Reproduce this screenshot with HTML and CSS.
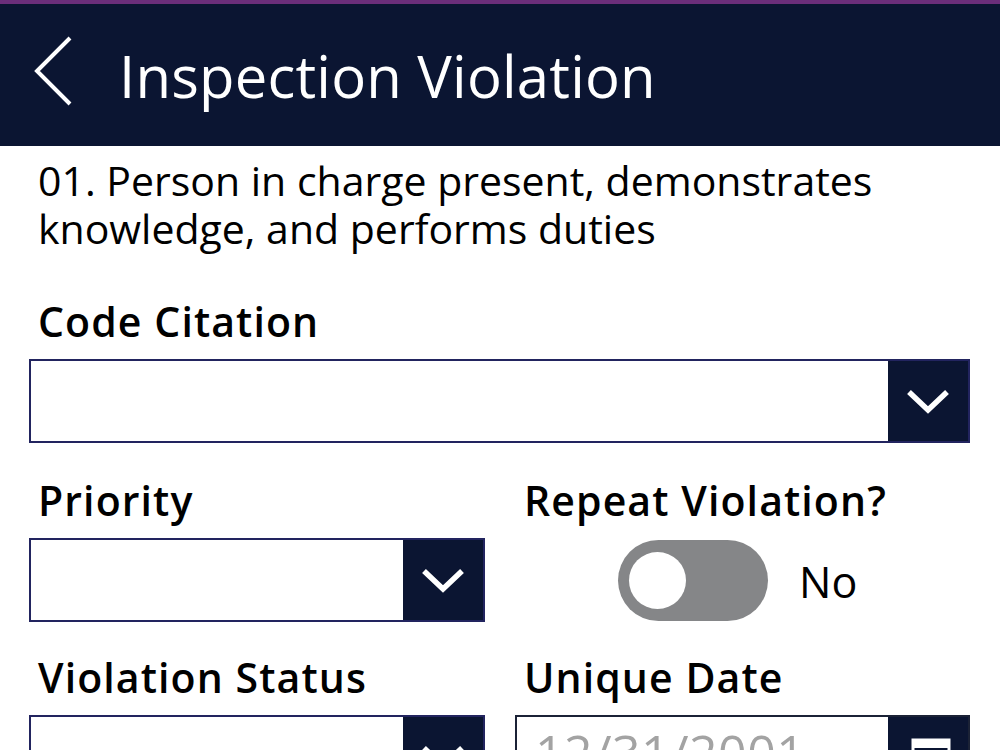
FILE: index.html
```html
<!DOCTYPE html>
<html>
<head>
<meta charset="utf-8">
<link rel="stylesheet" href="styles.css">
</head>
<body>
<div class="topstrip"></div>
<header class="header">
  <svg class="back" width="50" height="80" viewBox="0 0 50 80"><polyline points="36,2 3,35 36,68" fill="none" stroke="#fff" stroke-width="4"/></svg>
  <h1 class="title">Inspection Violation</h1>
</header>
<main class="form">
  <p class="desc">01. Person in charge present, demonstrates knowledge, and performs duties</p>
  <div class="field">
    <label class="label">Code Citation</label>
    <div class="select">
      <div class="select-value"></div>
      <div class="select-btn"><svg width="44" height="26" viewBox="0 0 44 26"><polyline points="3,3 22,21 41,3" fill="none" stroke="#fff" stroke-width="5.5"/></svg></div>
    </div>
  </div>
  <div class="row">
    <div class="field">
      <label class="label">Priority</label>
      <div class="select">
        <div class="select-value"></div>
        <div class="select-btn"><svg width="44" height="26" viewBox="0 0 44 26"><polyline points="3,3 22,21 41,3" fill="none" stroke="#fff" stroke-width="5.5"/></svg></div>
      </div>
    </div>
    <div class="field">
      <label class="label">Repeat Violation?</label>
      <div class="toggle-row">
        <div class="toggle"><div class="knob"></div></div>
        <span class="toggle-text">No</span>
      </div>
    </div>
  </div>
  <div class="row row-last">
    <div class="field">
      <label class="label">Violation Status</label>
      <div class="select">
        <div class="select-value"></div>
        <div class="select-btn"><svg width="44" height="26" viewBox="0 0 44 26"><polyline points="3,3 22,21 41,3" fill="none" stroke="#fff" stroke-width="5.5"/></svg></div>
      </div>
    </div>
    <div class="field">
      <label class="label">Unique Date</label>
      <div class="select date">
        <div class="select-value date-text">12/31/2001</div>
        <div class="select-btn cal-btn"><svg width="40" height="40" viewBox="0 0 40 40"><rect x="2" y="2" width="36" height="34" fill="none" stroke="#fff" stroke-width="3"/><rect x="2" y="2" width="36" height="8" fill="#fff"/></svg></div>
      </div>
    </div>
  </div>
</main>
</body>
</html>
```

FILE: styles.css
```css
html, body {
  margin: 0;
  padding: 0;
  background: #fff;
}
body {
  font-family: "Open Sans", "Liberation Sans", sans-serif;
  color: #000;
  width: 1000px;
  height: 750px;
  overflow: hidden;
}
.topstrip {
  height: 4px;
  background: #6b2e7a;
}
.header {
  height: 142px;
  background: #0b1532;
  display: flex;
  align-items: center;
  box-sizing: border-box;
  padding-left: 34px;
}
.back {
  display: block;
  margin-top: 2px;
}
.title {
  margin: 2px 0 0 35px;
  font-weight: 400;
  font-size: 58px;
  line-height: 70px;
  color: #fff;
  letter-spacing: 0.2px;
}
.form {
  padding: 10px 30px 0 29px;
}
.desc {
  margin: 0 0 45px 0;
  padding-left: 9px;
  font-size: 41px;
  line-height: 48px;
}
.field {
  display: flex;
  flex-direction: column;
}
.label {
  padding-left: 9px;
  font-weight: 600;
  font-size: 41px;
  letter-spacing: 1.1px;
  line-height: 48px;
  margin-bottom: 14px;
}
.row {
  display: grid;
  grid-template-columns: 456px 455px;
  column-gap: 30px;
  margin-top: 33px;
}
.row-last {
  margin-top: 31px;
}
.select {
  display: flex;
  height: 84px;
  box-sizing: border-box;
  border: 2px solid #22245f;
  background: #fff;
}
.select-value {
  flex: 1;
}
.select-btn {
  width: 80px;
  background: #0b1532;
  display: flex;
  align-items: center;
  justify-content: center;
}
.select-btn svg {
  margin-top: 2px;
}
.toggle-row {
  display: flex;
  align-items: center;
  padding-left: 103px;
  height: 84px;
}
.toggle {
  width: 150px;
  height: 81px;
  border-radius: 41px;
  background: #858688;
  position: relative;
}
.knob {
  position: absolute;
  left: 11px;
  top: 12px;
  width: 57px;
  height: 57px;
  border-radius: 50%;
  background: #fff;
}
.toggle-text {
  margin-left: 31px;
  font-size: 43px;
  line-height: 48px;
  margin-top: 4px;
}
.date {
  border-color: #1b2236;
}
.date-text {
  font-size: 50px;
  line-height: 60px;
  color: #a3a3a3;
  padding-left: 18px;
  padding-top: 5px;
  letter-spacing: 0.5px;
}
.cal-btn {
  align-items: flex-start;
  padding-left: 6px;
  box-sizing: border-box;
}
.cal-btn svg {
  margin-top: 21px;
}
```
